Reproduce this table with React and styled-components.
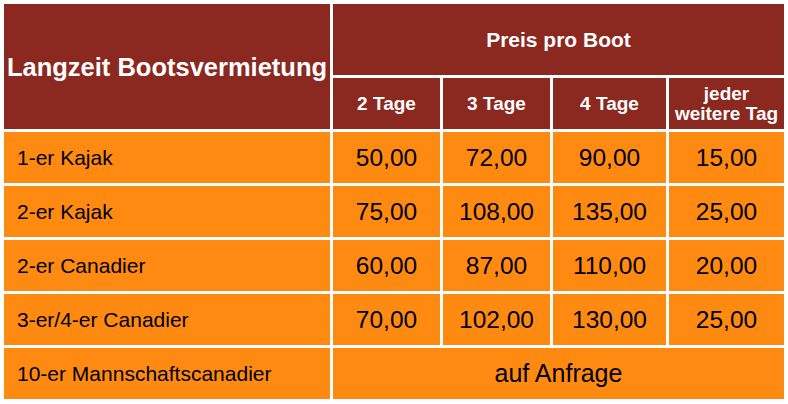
import styled, { createGlobalStyle } from "styled-components"

const GlobalStyle = createGlobalStyle`
  html, body {
    margin: 0;
    padding: 0;
    background: #ffffff;
  }
  body {
    font-family: "Liberation Sans", Arial, sans-serif;
  }
`

const Wrap = styled.div`
  padding: 1px;
  width: 788px;
  box-sizing: border-box;
`

const Table = styled.table`
  border-collapse: separate;
  border-spacing: 3px;
  table-layout: fixed;
  width: 786px;
`

const HeadCell = styled.th`
  background-color: #8b2820;
  color: #ffffff;
  font-weight: 700;
  text-align: center;
  vertical-align: middle;
  padding: 0;
  white-space: nowrap;
  font-size: ${(p) => p.$size || 19}px;
  line-height: 20px;
`

const HeadRow = styled.tr`
  height: ${(p) => p.$height}px;
`

const BodyRow = styled.tr`
  height: 51px;
`

const LabelCell = styled.td`
  background-color: #ff8a12;
  color: #000000;
  font-size: 21px;
  padding: 0 0 0 13px;
  vertical-align: middle;
  white-space: nowrap;
`

const PriceCell = styled.td`
  background-color: #ff8a12;
  color: #000000;
  font-size: ${(p) => p.$size || 24.5}px;
  text-align: center;
  vertical-align: middle;
  padding: 0;
`

const rows = [
  ["1-er Kajak", "50,00", "72,00", "90,00", "15,00"],
  ["2-er Kajak", "75,00", "108,00", "135,00", "25,00"],
  ["2-er Canadier", "60,00", "87,00", "110,00", "20,00"],
  ["3-er/4-er Canadier", "70,00", "102,00", "130,00", "25,00"],
]

const App = () => {
  return (
    <>
      <GlobalStyle />
      <Wrap>
        <Table>
          <colgroup>
            <col style={{ width: 326 }} />
            <col style={{ width: 107 }} />
            <col style={{ width: 107 }} />
            <col style={{ width: 113 }} />
            <col style={{ width: 115 }} />
          </colgroup>
          <thead>
            <HeadRow $height={71}>
              <HeadCell rowSpan={2} $size={25.5}>Langzeit Bootsvermietung</HeadCell>
              <HeadCell colSpan={4} $size={21}>Preis pro Boot</HeadCell>
            </HeadRow>
            <HeadRow $height={51}>
              <HeadCell>2 Tage</HeadCell>
              <HeadCell>3 Tage</HeadCell>
              <HeadCell>4 Tage</HeadCell>
              <HeadCell>jeder<br />weitere Tag</HeadCell>
            </HeadRow>
          </thead>
          <tbody>
            {rows.map(([label, ...prices]) => (
              <BodyRow key={label}>
                <LabelCell>{label}</LabelCell>
                {prices.map((p, i) => (
                  <PriceCell key={i}>{p}</PriceCell>
                ))}
              </BodyRow>
            ))}
            <BodyRow>
              <LabelCell>10-er Mannschaftscanadier</LabelCell>
              <PriceCell colSpan={4} $size={25}>auf Anfrage</PriceCell>
            </BodyRow>
          </tbody>
        </Table>
      </Wrap>
    </>
  )
}

export default App
